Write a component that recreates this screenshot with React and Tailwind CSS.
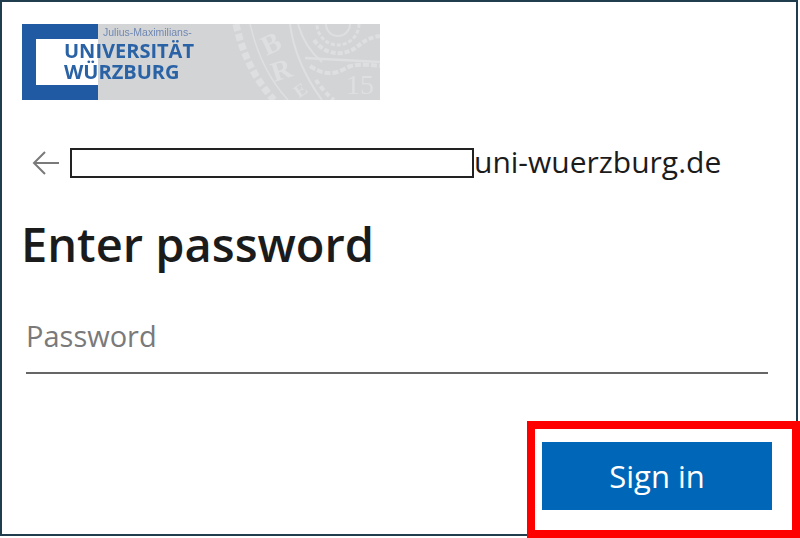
import React from "react";

function Seal() {
  return (
    <svg className="absolute right-0 top-0 blur-[0.7px]" width="150" height="76" viewBox="0 0 150 76" fill="none">
      <g stroke="#dedfe0" fill="none">
        <path d="M6 0 C 12 28 24 54 44 76" strokeWidth="7" strokeDasharray="7 3" />
        <path d="M20 0 C 26 26 38 54 58 76" strokeWidth="1.5" />
        <path d="M60 0 C 64 30 76 54 92 76" strokeWidth="2" />
        <path d="M68 0 C 72 14 80 28 92 38" strokeWidth="2" />
        <path d="M75 34 L150 38" strokeWidth="2.5" />
        <path d="M80 42 C 92 50 102 52 116 44 C 124 40 132 40 150 42" strokeWidth="4" strokeDasharray="6 2" />
        <path d="M86 56 C 90 62 96 70 104 76" strokeWidth="4" strokeDasharray="5 3" />
        <path d="M84 16 C 94 30 110 32 122 26 C 130 22 134 14 150 12" strokeWidth="4" strokeDasharray="5 2" />
        <circle cx="108" cy="0" r="21" strokeWidth="3" strokeDasharray="4 2" />
        <circle cx="108" cy="0" r="12" strokeWidth="2" />
      </g>
      <g fontFamily="'Liberation Serif', serif" fontWeight="700" fill="#dedfe0" textAnchor="middle">
        <text x="0" y="0" fontSize="28" transform="translate(45 28) rotate(-25)">B</text>
        <text x="0" y="0" fontSize="28" transform="translate(54 55) rotate(-18)">R</text>
        <text x="0" y="0" fontSize="18" transform="translate(74 71) rotate(-35)">E</text>
      </g>
      <text x="116" y="70" fontFamily="'Liberation Serif', serif" fontSize="28" fill="#dedfe0">15</text>
    </svg>
  );
}

function Logo() {
  return (
    <div className="relative h-[76px] w-[358px] overflow-hidden bg-[#d3d4d6]">
      <div className="absolute left-0 top-0 h-full w-[76px] border-y-[15px] border-l-[14px] border-[#1f5aa3] bg-white" />
      <Seal />
      <div className="absolute left-[81px] top-[2px] font-['Liberation_Sans',sans-serif] text-[10.5px] leading-[12px] text-[#6f88b2] whitespace-nowrap blur-[0.4px]">
        Julius-Maximilians-
      </div>
      <div className="absolute left-[42px] top-[16px] font-['Open_Sans',sans-serif] text-[20px] font-bold leading-[21px] text-[#2a62a6] whitespace-nowrap blur-[0.4px]">
        UNIVERSITÄT
        <br />
        WÜRZBURG
      </div>
    </div>
  );
}

export default function App() {
  return (
    <div className="relative h-[538px] w-[800px] overflow-hidden bg-white font-['Open_Sans',sans-serif]">
      <div className="h-[536px] w-[798px] border-2 border-[#1f3d4d] pl-5 pt-[22px]">
        <Logo />
        <div className="mt-[47px] flex h-[32px] items-center">
          <svg width="28" height="24" viewBox="0 0 28 24" fill="none" stroke="#7a7a7a" strokeWidth="2" className="ml-[10px] shrink-0">
            <path d="M27 12 H2" />
            <path d="M13 1 L2 12 L13 23" />
          </svg>
          <div className="ml-[10px] h-[30px] w-[404px] shrink-0 border-2 border-[#222222] bg-white" />
          <span className="-mt-0.5 whitespace-nowrap text-[30px] leading-[32px] text-[#1b1b1b]">uni-wuerzburg.de</span>
        </div>
        <h1 className="-ml-px mt-[34px] whitespace-nowrap text-[47px] font-semibold leading-[62px] text-[#1b1b1b]">Enter password</h1>
        <div className="ml-[4px] mt-[32px] h-[67px] w-[742px] border-b-2 border-[#666666] pt-[10px] text-[29px] leading-[38px] text-[#7a7a7a]">
          Password
        </div>
      </div>
      <div className="absolute left-[527px] top-[421px] h-[117px] w-[273px] border-[8px] border-[#ff0000] bg-white pl-[7px] pt-[13px]">
        <button className="flex h-[68px] w-[230px] items-center justify-center bg-[#0067b8] text-[31px] text-white">
          Sign in
        </button>
      </div>
    </div>
  );
}
